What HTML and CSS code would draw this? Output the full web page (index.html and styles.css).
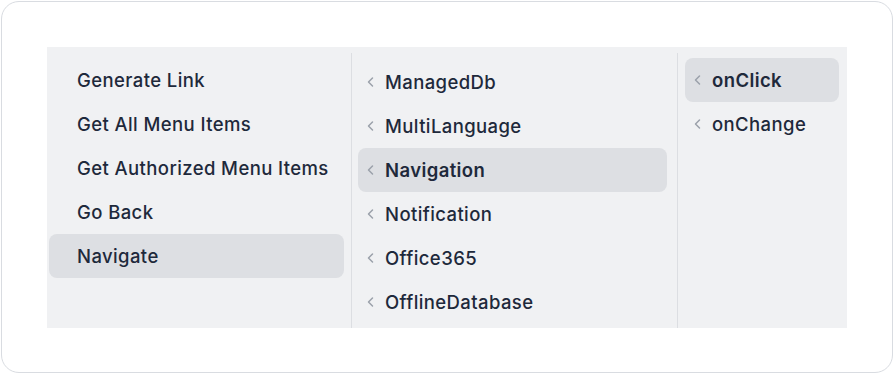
FILE: index.html
```html
<!DOCTYPE html>
<html lang="en">
<head>
    <meta charset="UTF-8">
    <meta name="viewport" content="width=device-width, initial-scale=1.0">
    <title>Action Picker</title>
    <link rel="stylesheet" href="styles.css">
</head>
<body>
    <div class="card">
        <div class="panel">
            <div class="col col-actions">
                <div class="item">Generate Link</div>
                <div class="item">Get All Menu Items</div>
                <div class="item">Get Authorized Menu Items</div>
                <div class="item">Go Back</div>
                <div class="item active">Navigate</div>
            </div>

            <div class="col col-modules">
                <div class="item"><svg class="chev" viewBox="0 0 8 12"><path d="M5.5 2 L1.5 6 L5.5 10"/></svg>ManagedDb</div>
                <div class="item"><svg class="chev" viewBox="0 0 8 12"><path d="M5.5 2 L1.5 6 L5.5 10"/></svg>MultiLanguage</div>
                <div class="item active"><svg class="chev" viewBox="0 0 8 12"><path d="M5.5 2 L1.5 6 L5.5 10"/></svg>Navigation</div>
                <div class="item"><svg class="chev" viewBox="0 0 8 12"><path d="M5.5 2 L1.5 6 L5.5 10"/></svg>Notification</div>
                <div class="item"><svg class="chev" viewBox="0 0 8 12"><path d="M5.5 2 L1.5 6 L5.5 10"/></svg>Office365</div>
                <div class="item"><svg class="chev" viewBox="0 0 8 12"><path d="M5.5 2 L1.5 6 L5.5 10"/></svg>OfflineDatabase</div>
            </div>

            <div class="col col-events">
                <div class="item active"><svg class="chev" viewBox="0 0 8 12"><path d="M5.5 2 L1.5 6 L5.5 10"/></svg>onClick</div>
                <div class="item"><svg class="chev" viewBox="0 0 8 12"><path d="M5.5 2 L1.5 6 L5.5 10"/></svg>onChange</div>
            </div>
        </div>
    </div>
</body>
</html>
```

FILE: styles.css
```css
html, body {
    margin: 0;
    padding: 0;
    background: #ffffff;
}
body {
    font-family: Inter, 'Noto Sans', sans-serif;
    padding: 1px;
}
.card {
    box-sizing: border-box;
    width: 892px;
    height: 372px;
    border: 1px solid #d9dce1;
    border-radius: 18px;
    background: white;
    padding: 45px;
}
.panel {
    display: flex;
    width: 800px;
    height: 281px;
    background: #f0f1f3;
    padding-top: 6px;
    box-sizing: border-box;
    overflow: hidden;
}
.col {
    display: flex;
    flex-direction: column;
    box-sizing: border-box;
}
.col-actions {
    width: 304px;
    padding: 5px 7px 0 2px;
}
.col-modules {
    width: 326px;
    border-left: 1px solid #dcdee2;
    padding: 7px 10px 0 6px;
}
.col-events {
    flex: 1;
    border-left: 1px solid #dcdee2;
    padding: 5px 8px 0 7px;
}
.item {
    display: flex;
    align-items: center;
    height: 44px;
    padding-bottom: 1px;
    box-sizing: border-box;
    flex-shrink: 0;
    border-radius: 8px;
    font-size: 18.5px;
    font-weight: 500;
    color: #1e293b;
    letter-spacing: 0.4px;
    white-space: nowrap;
}
.col-actions .item {
    padding-left: 28px;
}
.col-modules .item,
.col-events .item {
    padding-left: 9px;
}
.item.active {
    background: #dddfe3;
}
.col-modules .item.active,
.col-events .item.active {
    font-weight: 600;
}
.chev {
    width: 8px;
    height: 12px;
    margin-right: 10px;
    fill: none;
    stroke: #9aa0aa;
    stroke-width: 1.5;
    stroke-linecap: round;
    stroke-linejoin: round;
}
```
